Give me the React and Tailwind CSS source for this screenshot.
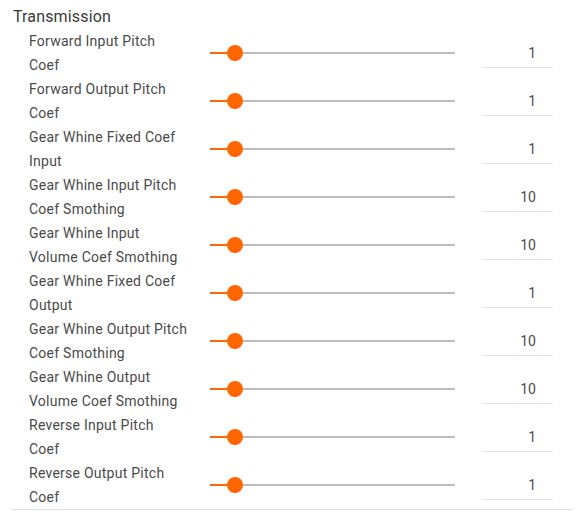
const rows = [
  ["Forward Input Pitch", "Coef", "1"],
  ["Forward Output Pitch", "Coef", "1"],
  ["Gear Whine Fixed Coef", "Input", "1"],
  ["Gear Whine Input Pitch", "Coef Smothing", "10"],
  ["Gear Whine Input", "Volume Coef Smothing", "10"],
  ["Gear Whine Fixed Coef", "Output", "1"],
  ["Gear Whine Output Pitch", "Coef Smothing", "10"],
  ["Gear Whine Output", "Volume Coef Smothing", "10"],
  ["Reverse Input Pitch", "Coef", "1"],
  ["Reverse Output Pitch", "Coef", "1"],
];

function Slider() {
  // filled part, thumb, rest of the rail
  return (
    <div className="flex w-[245px] items-center">
      <div className="h-[2px] w-[17px] bg-[#ff6600]" />
      <div className="h-4 w-4 shrink-0 rounded-full bg-[#ff6600]" />
      <div className="h-[2px] flex-1 bg-[#bdbdbd]" />
    </div>
  );
}

export default function App() {
  return (
    <div className="w-[586px] h-[520px] bg-white font-['Roboto',sans-serif] text-[#4a4a4a]">
      <div className="pl-3 pr-[13px] pt-[5px]">
        <div className="pl-[1px] text-[16px] leading-6 tracking-[0.15px] text-[#3a3a3a]">Transmission</div>
        <div className="border-b border-[#e0e0e0]">
          {rows.map(([line1, line2, value]) => (
            <div key={line1 + line2} className="flex h-12 items-center pl-[17px]">
              <div className="w-[160px] text-[14px] leading-6 tracking-[0.25px]">
                <div className="whitespace-nowrap">{line1}</div>
                <div className="whitespace-nowrap">{line2}</div>
              </div>
              <div className="ml-[21px]">
                <Slider />
              </div>
              <div className="ml-[27px] flex h-[30px] w-[71px] items-center justify-end border-b border-[#e0e0e0] pr-[17px] pt-[1px] text-[14px]">
                {value}
              </div>
            </div>
          ))}
        </div>
      </div>
    </div>
  );
}
